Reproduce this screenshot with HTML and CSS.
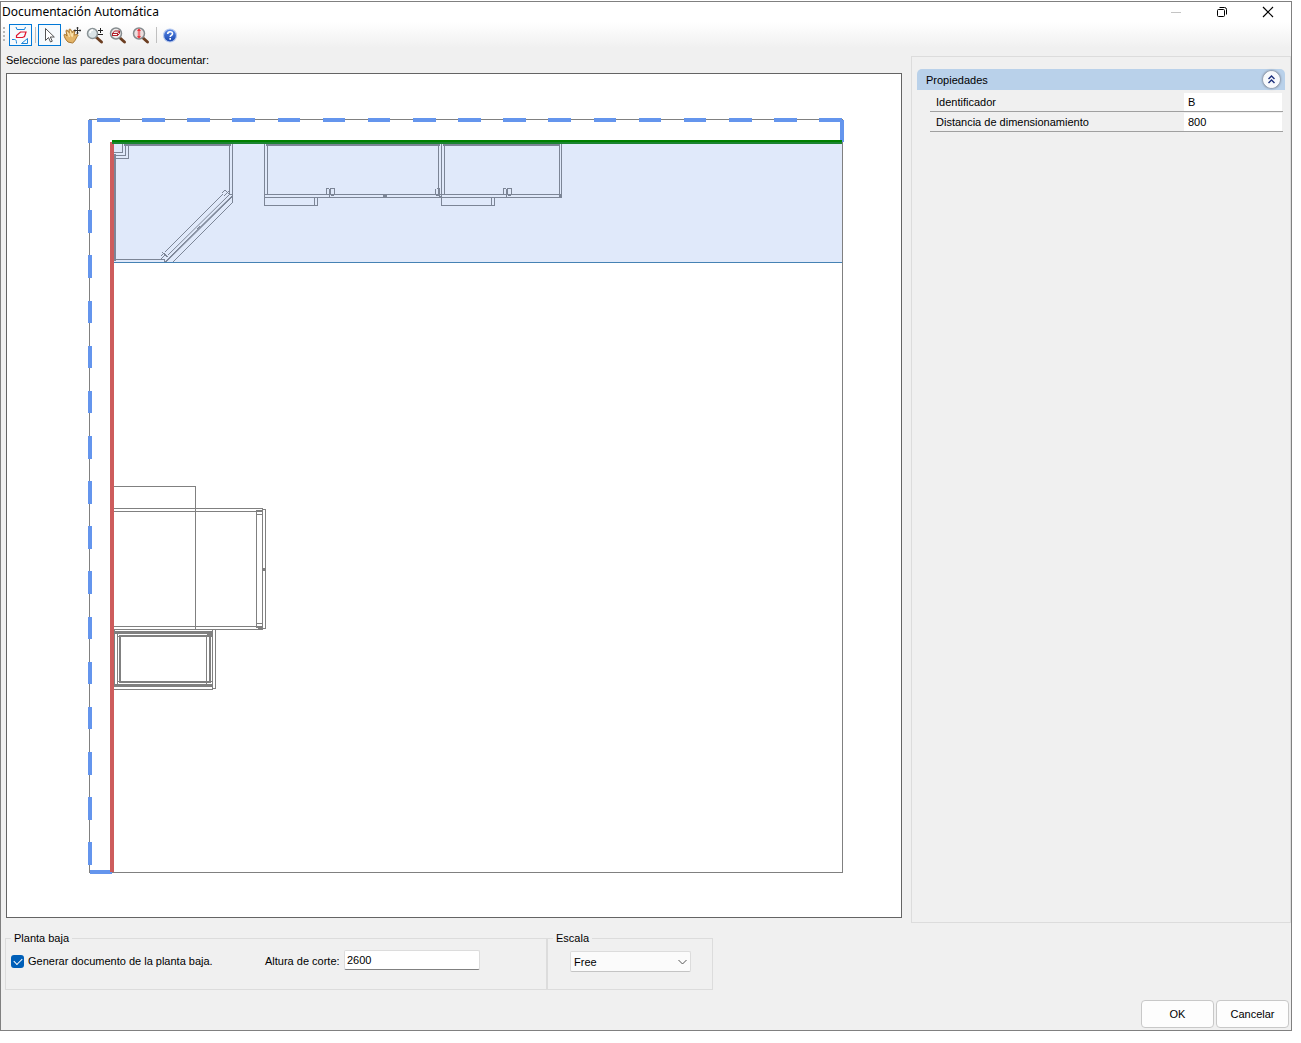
FILE: index.html
```html
<!DOCTYPE html>
<html lang="es">
<head>
    <meta charset="UTF-8">
    <meta name="viewport" content="width=device-width, initial-scale=1.0">
    <title>Documentación Automática</title>
    <link rel="stylesheet" href="styles.css">
</head>
<body>
    <div class="window">
        <header class="titlebar">
            <h1>Documentación Automática</h1>
            <div class="window-buttons">
                <button type="button" aria-label="Minimizar" disabled>
                    <svg width="12" height="12"><path d="M1 6.5h10" stroke="#c4c4c4"/></svg>
                </button>
                <button type="button" aria-label="Restaurar">
                    <svg width="12" height="12" fill="none" stroke="#000"><rect x="1.5" y="3.5" width="7" height="7" rx="1"/><path d="M3.5 1.5h5a2 2 0 0 1 2 2v5"/></svg>
                </button>
                <button type="button" aria-label="Cerrar">
                    <svg width="12" height="12"><path d="M1 1l10 10M11 1L1 11" stroke="#000" stroke-width="1.2"/></svg>
                </button>
            </div>
        </header>

        <div class="toolbar">
            <span class="grip"></span>
            <button type="button" class="tool active" aria-label="Documentar paredes">
                <svg width="19" height="19" fill="none">
                    <path d="M5 1l1 2.500h7.500l1-2.500" stroke="#1a84d8"/>
                    <path d="M9.500 6H15l-1.500 4.500-2 1H5.500V9.500z" stroke="#e0142c" stroke-width="1.200"/>
                    <path d="M1 13.500h2.500c1.500 0 2 1 2 4M10.500 17.500l6-5v5z" stroke="#1a84d8"/>
                </svg>
            </button>
            <span class="sep"></span>
            <button type="button" class="tool active" aria-label="Seleccionar">
                <svg width="19" height="19"><path d="M5.500 2.500v12l3-3 2 4.500 1.800-.8-2-4.200h4z" fill="#fff" stroke="#555"/></svg>
            </button>
            <button type="button" class="tool" aria-label="Mover">
                <svg width="19" height="19">
                    <path d="M5 16C2 13 1.500 11 1 9c0-1 1.500-1 2 0l1 1-1-5c0-1.300 1.500-1.300 2 0l1 2V4c0-1.300 1.700-1.300 2 0l1 3 1-2c.7-1 2-.3 1.800.8L11 9l3-.5c1.300 0 1.200 1.200.3 1.800C13 12 12 16 9.500 17z" fill="#e3b468" stroke="#a8752f"/>
                    <path d="M4.500 6l2 5M7.500 5l1 5M10 7l-1 4" stroke="#fbe3ad" stroke-width="1.300"/>
                    <path d="M14.500 1v7M11 4.500h7M13.500 2h2M13.500 7h2M12 3.500v2M17 3.500v2" fill="none" stroke="#333"/>
                </svg>
            </button>
            <button type="button" class="tool" aria-label="Acercar o alejar">
                <svg width="19" height="19">
                    <path d="M10.500 11.500l5 4.500" stroke="#6b3d20" stroke-width="3" stroke-linecap="round"/>
                    <circle cx="6.500" cy="7.500" r="5" fill="#dbe4e7" stroke="#8a9396" stroke-width="1.500"/>
                    <path d="M4 7a3 3 0 0 1 3-3" fill="none" stroke="#fff" stroke-width="1.500"/>
                    <path d="M14.500 2v5M12 4.500h5M12 8.500h5" stroke="#222"/>
                </svg>
            </button>
            <button type="button" class="tool" aria-label="Zoom de ventana">
                <svg width="19" height="19">
                    <path d="M10.500 11.500l5 4.500" stroke="#6b3d20" stroke-width="3" stroke-linecap="round"/>
                    <circle cx="7" cy="7.500" r="5.500" fill="#eceaea" stroke="#858b8e" stroke-width="1.500"/>
                    <rect x="3.500" y="7.500" width="5" height="2" fill="#fff" stroke="#b3202c"/>
                    <path d="M3.500 7.500l2-2.500h5v2.500l-2 2M8.500 7.500l2-2.500" fill="none" stroke="#b3202c"/>
                </svg>
            </button>
            <button type="button" class="tool" aria-label="Zoom total">
                <svg width="19" height="19">
                    <path d="M10.500 11.500l5 4.500" stroke="#6b3d20" stroke-width="3" stroke-linecap="round"/>
                    <circle cx="7" cy="7.500" r="5.500" fill="#ecdfdf" stroke="#858b8e" stroke-width="1.500"/>
                    <path d="M7 3v9" stroke="#f0767b" stroke-width="2.500"/>
                    <path d="M5 5l2-2.500 2 2.500zM5 10l2 2.500 2-2.500z" fill="#e8343b"/>
                </svg>
            </button>
            <span class="sep"></span>
            <button type="button" class="tool" aria-label="Ayuda">
                <svg width="19" height="19">
                    <defs>
                        <linearGradient id="helpFill" x2="0" y2="1"><stop stop-color="#5b8bea"/><stop offset="1" stop-color="#1744ac"/></linearGradient>
                    </defs>
                    <circle cx="9" cy="9.500" r="6.500" fill="url(#helpFill)" stroke="#b7c9ee" stroke-width="1.200"/>
                    <path d="M6.700 8c0-3 4.800-3 4.800-.3 0 1.700-2.300 1.500-2.300 3.300M9.200 12v1.800" fill="none" stroke="#fff" stroke-width="1.600"/>
                </svg>
            </button>
        </div>

        <main class="content">
            <section class="plan">
                <p class="hint">Seleccione las paredes para documentar:</p>
                <svg class="canvas" viewBox="7 74 894 843" role="img" aria-label="Planta con paredes">
                    <!-- documentation area of the selected wall -->
                    <rect class="area" x="113" y="144" width="729" height="118"/>
                    <path class="area-edge" d="M113 262.500H842"/>

                    <!-- room outline -->
                    <path class="line" d="M842.500 119V872.500H89.500V119.500H842"/>

                    <!-- corner cabinet -->
                    <g class="furniture">
                        <path d="M229.500 144V194M232.500 144V202.500M114 152.500H122.500V144M114 155.500H125.500V144M114 158.500H128.500V144M115 259.500H165M164.500 259V262M229 194.500H232"/>
                        <path d="M124 145H231M115 154V261" class="thick"/>
                        <path d="M165 252L223 194M168 255L229 195M170 257L231 197M165 262L232 196M166 262L232 197M173 262L232 203" class="diagonal"/>
                        <path d="M222 193L225 190L230 195M224 196L229 191M161 256L164 253L168 257M162 252L167 257M161 259L166 254M197 229L200 226" class="diagonal"/>
                    </g>

                    <!-- top cabinets -->
                    <g class="furniture">
                        <path d="M264.500 144V205.500H317.500V197M314.500 197V205M267.500 146V194M438.500 146V194M441.500 144V205.500H494.500V197M491.500 197V205M444.500 146V194M559.500 144V197M561.500 144V197M264 194.500H562M264 197.500H562"/>
                        <path d="M266 145H440M443 145H560" class="thick"/>
                        <path d="M326.500 194V188.500H329M329.500 189V197M330.500 188.500H334.500V194.500H330.500zM331 195.500H334M435.500 194V189M436.500 188.500H439.500V195.500H436M503.500 194V188.500H506M506.500 189V197M507.500 188.500H511.500V194.500H507.500zM508 195.500H511"/>
                        <path d="M383 196H387M439 196.500H441M559 196H562" class="thick"/>
                    </g>

                    <!-- cabinets on the left wall -->
                    <g class="line">
                        <path d="M114 486.500H195.500V629M114 508.500H262.500V629.500H114M114 511.500H262M114 626.500H262M262 509.500H265.500V628.500H262M262 510.500H256.500V627.500H262M256 514.500H262M256 623.500H262M258 628.500H262"/>
                        <path d="M262 569H266" class="bar"/>
                        <path d="M114.500 630V686M117.500 634V684M206.500 636V684M212.500 630V689.500H114M215.500 630V688.500H212M117 636.500H212M117 681.500H212"/>
                        <path d="M114 632.500H213M114 685.500H213" class="bar"/>
                        <rect x="120" y="636" width="90" height="46" class="thick"/>
                        <path d="M207 634.500H212" class="thick"/>
                    </g>

                    <!-- selection frame -->
                    <path class="dashes" d="M97 120H843"/>
                    <path class="dashes" d="M90 120V872"/>
                    <path class="frame" d="M842 120V142M90 872H112"/>

                    <!-- walls -->
                    <path class="wall" d="M112 142V872"/>
                    <path class="wall selected" d="M112 142H842"/>
                    <path class="wall-shade" d="M112 143H842"/>
                </svg>
            </section>

            <aside class="side">
                <section class="properties">
                    <div class="properties-head">
                        <h2>Propiedades</h2>
                        <button type="button" class="collapse" aria-label="Contraer">
                            <svg width="9" height="9" fill="none" stroke="#1c2f7c" stroke-width="1.400"><path d="M1.500 4l3-3 3 3M1.500 8l3-3 3 3"/></svg>
                        </button>
                    </div>
                    <div class="property">
                        <label for="identifier">Identificador</label>
                        <input type="text" id="identifier" value="B">
                    </div>
                    <div class="property">
                        <label for="distance">Distancia de dimensionamiento</label>
                        <input type="text" id="distance" value="800">
                    </div>
                </section>
            </aside>
        </main>

        <form class="options">
            <fieldset class="floor">
                <legend>Planta baja</legend>
                <input type="checkbox" id="generate" checked>
                <label for="generate" class="generate">Generar documento de la planta baja.</label>
                <label for="cutHeight" class="cut-label">Altura de corte:</label>
                <input type="text" id="cutHeight" value="2600">
            </fieldset>
            <fieldset class="scale">
                <legend>Escala</legend>
                <div class="select-box">
                    <select id="scale" aria-label="Escala">
                        <option>Free</option>
                    </select>
                    <svg width="9" height="6" fill="none" stroke="#555"><path d="M.5 1l4 4 4-4"/></svg>
                </div>
            </fieldset>
        </form>

        <footer class="actions">
            <button type="button">OK</button>
            <button type="button">Cancelar</button>
        </footer>
    </div>
</body>
</html>
```
FILE: styles.css
```css
* {
    box-sizing: border-box;
}
body {
    margin: 0;
    padding: 1px 9px 12px 0;
    background: #fff;
    color: #000;
    font-family: "Liberation Sans", Arial, sans-serif;
    font-size: 11px;
    line-height: 14px;
}
button, input, select {
    margin: 0;
    color: inherit;
    font: inherit;
}
h1, h2, p {
    margin: 0;
    font-size: 11px;
    font-weight: normal;
}
svg {
    display: block;
}
.window {
    display: flex;
    flex-direction: column;
    min-height: calc(100vh - 13px);
    border: 1px solid #808080;
    background: #f0f0f0;
}

/* title bar */
.titlebar {
    display: flex;
    justify-content: space-between;
    align-items: center;
    height: 20px;
    padding-left: 1px;
    background: #fff;
}
.titlebar h1 {
    font-family: "Noto Sans", "Open Sans", sans-serif;
    font-size: 12px;
}
.window-buttons {
    display: flex;
}
.window-buttons button {
    display: flex;
    justify-content: center;
    align-items: center;
    width: 46px;
    height: 16px;
    padding: 0;
    border: none;
    background: none;
}

/* toolbar */
.toolbar {
    display: flex;
    align-items: center;
    height: 26px;
    padding-left: 2px;
    background: linear-gradient(#fff, #f0f0f0);
}
.grip {
    width: 2px;
    height: 16px;
    margin-right: 4px;
    background: repeating-linear-gradient(#b8b8b8 0 2px, transparent 2px 4px);
}
.sep {
    width: 1px;
    height: 16px;
    margin: 0 2px 0 3px;
    background: #c0c0c0;
}
.tool {
    display: flex;
    justify-content: center;
    align-items: center;
    width: 23px;
    height: 22px;
    padding: 0;
    border: 1px solid transparent;
    background: none;
}
.tool.active {
    border-color: #0078d7;
    background: #f6fafd;
}

/* plan and properties */
.content {
    display: flex;
    flex: 1;
    gap: 9px;
    padding-left: 5px;
}
.plan {
    display: flex;
    flex: 1;
    flex-direction: column;
    min-width: 0;
    padding: 5px 0;
}
.hint {
    margin: 0 0 6px;
}
.canvas {
    flex: 1;
    width: 100%;
    min-height: 300px;
    border: 1px solid #646464;
    background: #fff;
    shape-rendering: crispEdges;
}
.area {
    fill: #e0e9fa;
}
.area-edge {
    stroke: #4682b4;
}
.line {
    fill: none;
    stroke: #808080;
}
.furniture {
    fill: none;
    stroke: #7c8596;
}
.thick {
    stroke-width: 2;
}
.bar {
    stroke-width: 3;
}
.diagonal {
    shape-rendering: auto;
}
.dashes, .frame {
    fill: none;
    stroke: #6495ed;
    stroke-width: 4;
}
.dashes {
    stroke-dasharray: 22.57;
}
.wall {
    stroke: #cd5c5c;
    stroke-width: 4;
}
.wall.selected {
    stroke: #008000;
}
.wall-shade {
    stroke: #1a8530;
    stroke-width: 2;
}
.side {
    width: 380px;
    margin-top: 8px;
    padding: 12px 5px;
    border: 1px solid #dcdcdc;
}
.properties-head {
    display: flex;
    justify-content: space-between;
    align-items: center;
    height: 21px;
    margin-bottom: 2px;
    padding: 0 5px 0 9px;
    border-radius: 5px 5px 0 0;
    background: #b9d1ea;
}
.collapse {
    display: flex;
    justify-content: center;
    align-items: center;
    width: 17px;
    height: 17px;
    padding: 0;
    border: 1px solid #fff;
    border-radius: 50%;
    background: #f7f9fc;
    box-shadow: 0 0 2px 1px #8a94a4;
}
.property {
    display: flex;
    align-items: center;
    height: 20px;
    margin: 0 2px 0 13px;
    padding: 0 1px 0 6px;
    border-bottom: 1px solid #a0a0a0;
}
.property label {
    flex: 1;
}
.property input {
    width: 98px;
    height: 18px;
    padding: 0 4px;
    border: none;
    background: #fff;
}

/* options */
.options {
    display: flex;
    margin: 8px 0 10px 4px;
}
fieldset {
    display: flex;
    align-items: flex-start;
    min-width: 0;
    height: 59px;
    margin: 0;
    padding: 5px;
    border: 1px solid #dcdcdc;
}
legend {
    padding: 0 3px;
}
.floor {
    width: 542px;
}
.floor label {
    margin-top: 4px;
}
.floor .generate {
    width: 233px;
    margin-left: 4px;
}
.floor .cut-label {
    width: 76px;
    margin-left: 4px;
}
.floor input[type="checkbox"] {
    appearance: none;
    width: 13px;
    height: 13px;
    margin-top: 5px;
    border-radius: 3px;
    background: #005fb8;
}
.floor input[type="checkbox"]:checked::after {
    content: "";
    display: block;
    width: 7px;
    height: 4px;
    margin: 3px;
    border: solid #fff;
    border-width: 0 0 1px 1px;
    transform: rotate(-45deg);
}
.floor input[type="text"] {
    width: 136px;
    height: 20px;
    margin-left: 3px;
    padding: 0 2px;
    border: 1px solid #dcdcdc;
    border-bottom-color: #808080;
    border-radius: 2px;
    background: #fff;
}
.scale {
    width: 166px;
}
.select-box {
    position: relative;
    width: 121px;
    margin: 1px 0 0 17px;
}
.select-box select {
    appearance: none;
    width: 100%;
    height: 21px;
    padding: 0 3px;
    border: 1px solid #dcdcdc;
    border-bottom-color: #c4c4c4;
    border-radius: 2px;
    background: #fbfbfb;
}
.select-box svg {
    position: absolute;
    top: 8px;
    right: 4px;
    pointer-events: none;
}

/* actions */
.actions {
    display: flex;
    justify-content: flex-end;
    gap: 2px;
    padding: 0 2px 2px;
}
.actions button {
    width: 73px;
    height: 28px;
    padding: 0;
    border: 1px solid #c8c8c8;
    border-radius: 4px;
    background: #fdfdfd;
}
```
